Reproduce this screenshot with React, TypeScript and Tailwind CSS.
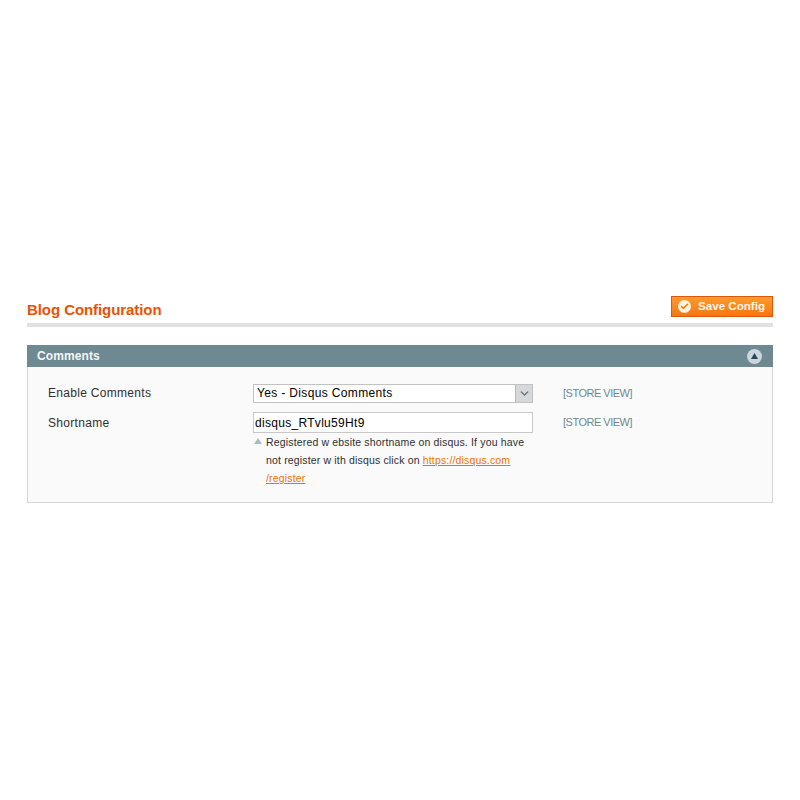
import { Check, ChevronDown } from 'lucide-react'

export default function App() {
  return (
    <div className="min-h-screen bg-white px-[27px] pt-[296px] font-['Liberation_Sans',Arial,sans-serif]">
      {/* Page title */}
      <div className="flex h-[27px] items-start justify-between border-b-4 border-[#e1e1e1] box-content">
        <h3 className="mt-[5px] text-[15px] font-bold leading-[18px] tracking-[-0.07px] text-[#eb5202]">Blog Configuration</h3>
        <button className="flex h-[21px] w-[102px] items-center border border-[#d85909] bg-gradient-to-b from-[#ff9a2e] to-[#f6760f] pl-[6px] text-[11.6px] font-bold text-[#fff6e5]">
          <span className="flex h-[13px] w-[13px] items-center justify-center rounded-full bg-[#fff3e0]">
            <Check className="h-[9px] w-[9px] text-[#f47a12]" strokeWidth={4} />
          </span>
          <span className="ml-[7px] -mt-[1px] leading-[14px]">Save Config</span>
        </button>
      </div>

      {/* Comments section */}
      <div className="mt-[18px]">
        <div className="flex h-[22px] items-center justify-between bg-[#6f8992] pl-[10px] pr-[11px]">
          <span className="text-[12px] font-bold tracking-[0.1px] text-[#f4f6f6]">Comments</span>
          <span className="flex h-[15px] w-[15px] items-center justify-center rounded-full bg-[#c9d6db]">
            <svg width="7" height="6" viewBox="0 0 7 6"><path d="M3.5 0 7 6H0z" fill="#27465f" /></svg>
          </span>
        </div>
        <div className="h-[136px] border border-t-0 border-[#d6d6d6] bg-[#fafafa] pl-[20px] pt-[17px]">
          <div className="flex items-start">
            <div className="w-[205px] pt-px text-[12px] leading-[16px] tracking-[0.3px] text-[#2f2f2f]">Enable Comments</div>
            <div className="flex h-[19px] w-[280px] items-center justify-between border border-[#c2c2c2] bg-white pl-[3px] text-[12px] tracking-[0.35px] text-black">
              <span className="-mt-px">Yes - Disqus Comments</span>
              <span className="flex h-[17px] w-[17px] items-center justify-center border-l border-[#b9b9b9] bg-[#d6d8d9]">
                <ChevronDown className="h-[13px] w-[13px] text-[#5f6f75]" strokeWidth={2.5} />
              </span>
            </div>
            <div className="ml-[30px] pt-px text-[11px] leading-[16px] tracking-[-0.5px] text-[#6f8992]">[STORE VIEW]</div>
          </div>
          <div className="mt-[10px] flex items-start">
            <div className="w-[205px] pt-[2px] text-[12px] leading-[16px] tracking-[0.3px] text-[#2f2f2f]">Shortname</div>
            <div className="w-[280px]">
              <div className="-mt-px flex h-[21px] items-center border border-[#c8c8c8] bg-white pl-px text-[12px] tracking-[0.3px] text-black">disqus_RTvlu59Ht9</div>
              <div className="relative pl-[13px] text-[10.5px] leading-[18px] tracking-[0.16px] text-[#2f2f2f]">
                <svg className="absolute left-[1px] top-[5px]" width="8" height="6" viewBox="0 0 8 6"><path d="M4 0 8 6H0z" fill="#a9bac4" /></svg>
                Registered w ebsite shortname on disqus. If you have
                <br />
                not register w ith disqus click on <a className="text-[#ea7601] underline">https://disqus.com</a>
                <br />
                <a className="text-[#ea7601] underline">/register</a>
              </div>
            </div>
            <div className="ml-[30px] pt-px text-[11px] leading-[16px] tracking-[-0.5px] text-[#6f8992]">[STORE VIEW]</div>
          </div>
        </div>
      </div>
    </div>
  )
}
